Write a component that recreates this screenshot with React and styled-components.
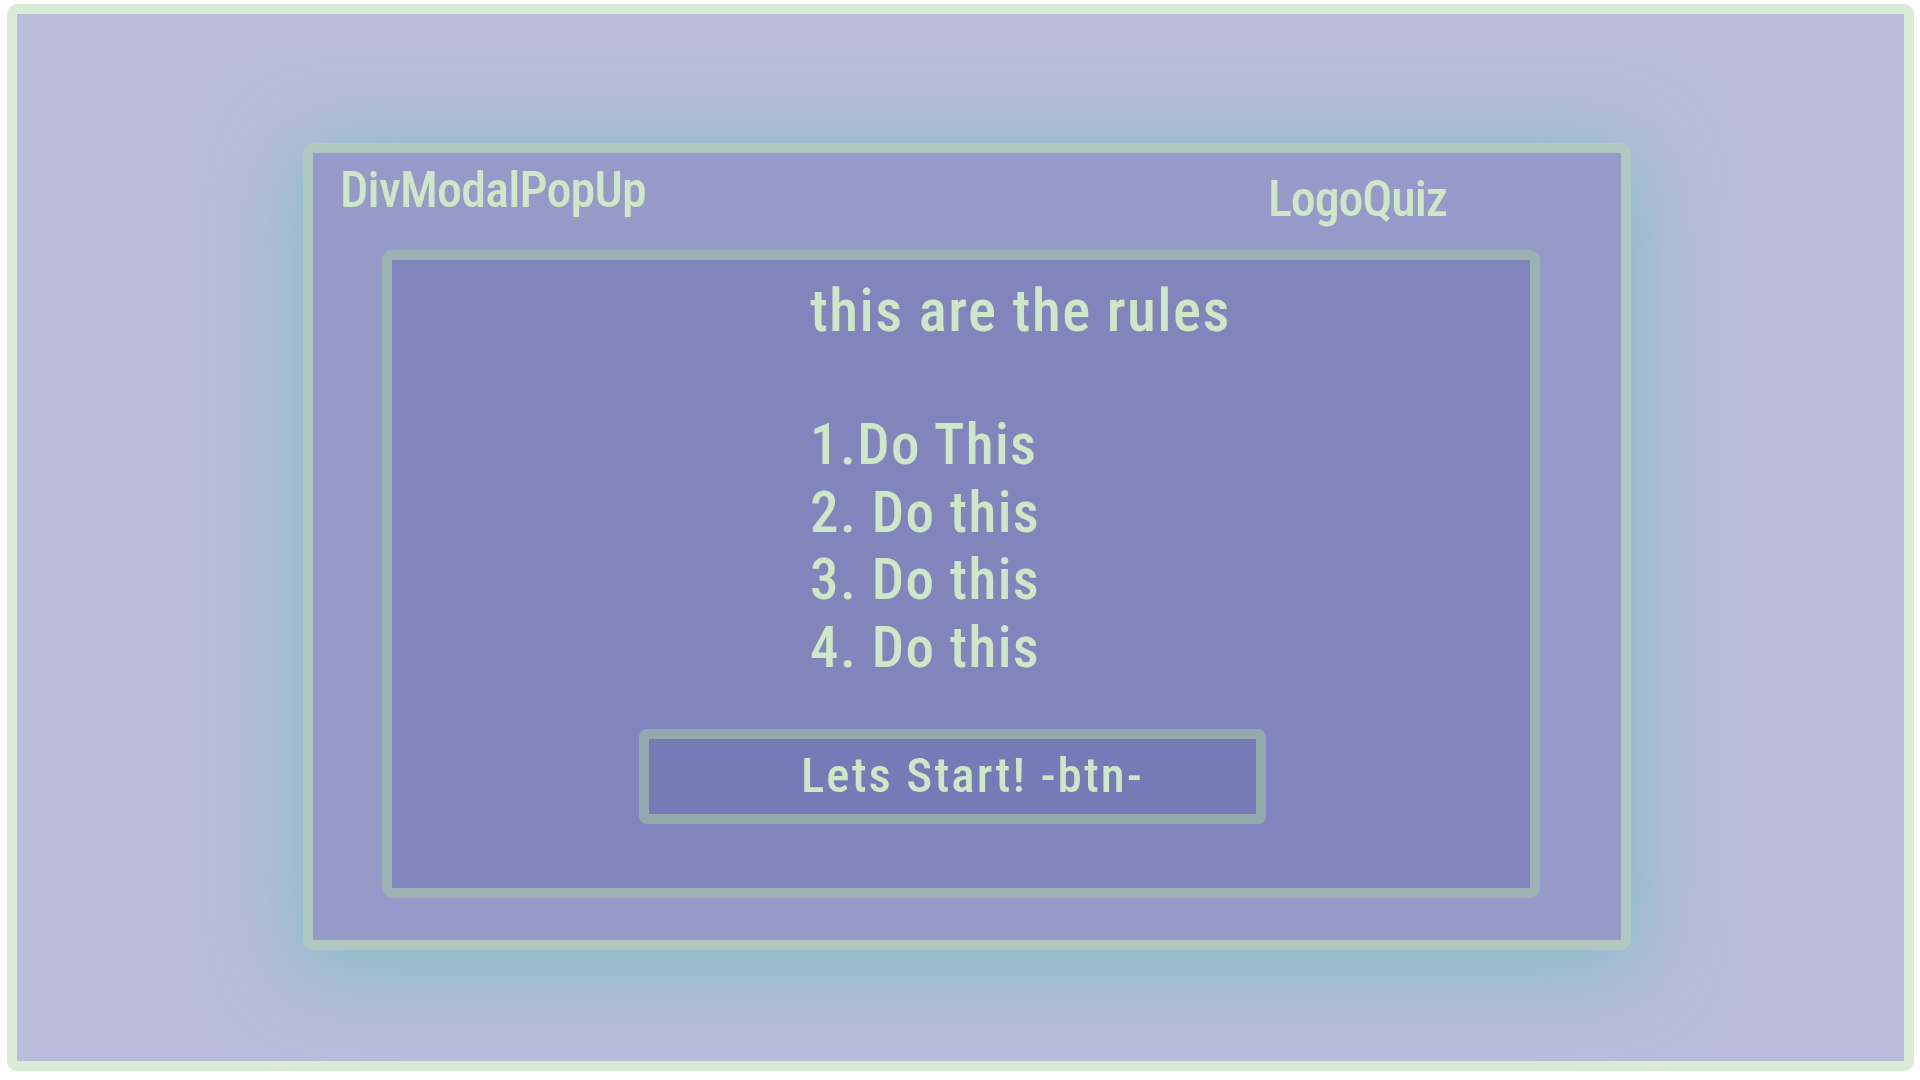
import React from "react";
import styled, { createGlobalStyle } from "styled-components";

const Global = createGlobalStyle`
  html, body {
    margin: 0;
    padding: 0;
    background: #ffffff;
  }
  body {
    font-family: "Roboto Condensed", "Liberation Sans Narrow", "DejaVu Sans Condensed", sans-serif;
    font-stretch: condensed;
  }
  * { box-sizing: border-box; }
`;

const Frame = styled.div`
  margin: 4px 6px 0 7px;
  width: 1907px;
  height: 1067px;
  border: 10px solid #d9ebd5;
  border-radius: 10px;
  background: #b9bddb;
  display: flex;
  align-items: flex-start;
  padding: 129px 0 0 286px;
`;

const Modal = styled.section`
  width: 1328px;
  height: 807px;
  border: 10px solid #b0c8bf;
  border-radius: 10px;
  background: #959ac8;
  box-shadow: 0 14px 85px 8px rgba(125, 188, 192, 0.88);
  display: flex;
  flex-direction: column;
`;

const Header = styled.header`
  height: 97px;
  display: grid;
  grid-template-columns: 928px auto;
  align-items: start;
  padding-left: 27px;
`;

const Label = styled.div`
  color: #cee7c6;
  font-size: 50px;
  font-weight: 500;
  line-height: 1;
  letter-spacing: ${(p) => p.$spacing || 0}px;
  margin-top: ${(p) => p.$top}px;
  white-space: nowrap;
`;

const RulesBox = styled.div`
  margin-left: 69px;
  width: 1158px;
  height: 648px;
  border: 10px solid #9db3b3;
  border-radius: 10px;
  background: #8085bb;
  display: flex;
  flex-direction: column;
  align-items: flex-start;
  padding: 21px 0 0 0;
`;

const Content = styled.div`
  padding-left: 418px;
  color: #cee7c6;
  font-weight: 500;
`;

const Title = styled.h2`
  margin: 0;
  font-weight: 500;
  font-size: 59px;
  line-height: 1;
  letter-spacing: 1.5px;
  white-space: nowrap;
`;

const RuleList = styled.div`
  margin-top: 71px;
  font-size: 57px;
  line-height: 67.6px;
  letter-spacing: 1.4px;
`;

const Rule = styled.div`
  white-space: nowrap;
`;

const StartButton = styled.button`
  margin: 48px 0 0 247px;
  width: 627px;
  height: 95px;
  border: 10px solid #93a9ae;
  border-radius: 8px;
  background: #757bb6;
  color: #cee7c6;
  font-family: inherit;
  font-stretch: condensed;
  font-weight: 500;
  font-size: 49px;
  line-height: 1;
  letter-spacing: 2.1px;
  padding: 0 0 3px 40px;
  display: flex;
  align-items: center;
  justify-content: center;
  cursor: pointer;
`;

const rules = ["1.Do This", "2. Do this", "3. Do this", "4. Do this"];

export default function App() {
  return (
    <>
      <Global />
      <Frame>
        <Modal>
          <Header>
            <Label $top={12} $spacing={-0.8}>DivModalPopUp</Label>
            <Label $top={21} $spacing={-1.1}>LogoQuiz</Label>
          </Header>
          <RulesBox>
            <Content>
              <Title>this are the rules</Title>
              <RuleList>
                {rules.map((r) => (
                  <Rule key={r}>{r}</Rule>
                ))}
              </RuleList>
            </Content>
            <StartButton>Lets Start! -btn-</StartButton>
          </RulesBox>
        </Modal>
      </Frame>
    </>
  );
}
